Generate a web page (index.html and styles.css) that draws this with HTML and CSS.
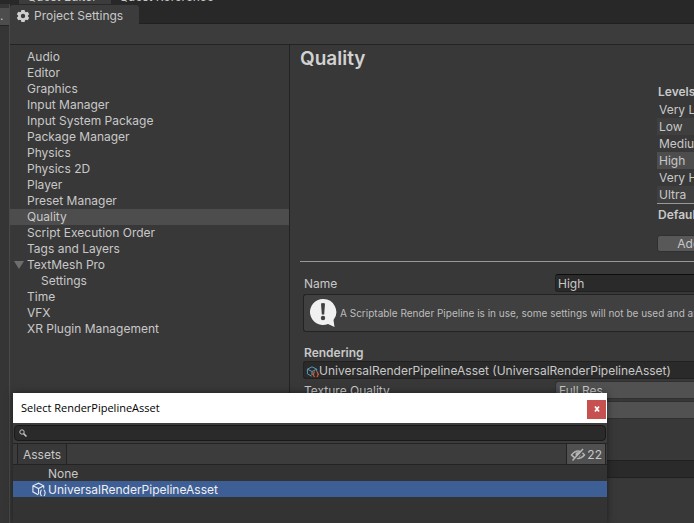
FILE: index.html
```html
<!DOCTYPE html>
<html lang="en">
<head>
<meta charset="utf-8">
<title>Project Settings</title>
<link rel="stylesheet" href="styles.css">
</head>
<body>
<div class="editor">
  <div class="back-tabs"><span class="back-tab back-tab-active">Quest Editor</span><span class="back-tab">Quest Reference</span></div>
  <div class="workspace">
    <div class="back-edge"><span class="back-button">.</span></div>
    <main class="settings">
      <div class="tab-bar">
        <div class="tab">
          <svg class="gear" viewBox="0 0 14 14" aria-hidden="true"><path fill="#d0d0d0" fill-rule="evenodd" d="M5.400 1h3.200l.4 1.700 1 .6 1.700-.5 1.500 2.500-1.300 1.200v1l1.300 1.200-1.500 2.500-1.700-.5-1 .6-.4 1.700H5.400L5 11.300l-1-.6-1.700.5L.8 8.700l1.300-1.200v-1L.8 5.300l1.500-2.500 1.700.5 1-.6zM7 4.800a2.200 2.200 0 1 0 0 4.400 2.200 2.200 0 0 0 0-4.400z"/></svg>
          <span>Project Settings</span>
        </div>
      </div>
      <div class="toolbar"></div>
      <div class="panes">
        <nav class="sidebar">
          <ul>
            <li>Audio</li>
            <li>Editor</li>
            <li>Graphics</li>
            <li>Input Manager</li>
            <li>Input System Package</li>
            <li>Package Manager</li>
            <li>Physics</li>
            <li>Physics 2D</li>
            <li>Player</li>
            <li>Preset Manager</li>
            <li class="selected">Quality</li>
            <li>Script Execution Order</li>
            <li>Tags and Layers</li>
            <li class="group">TextMesh Pro</li>
            <li class="child">Settings</li>
            <li>Time</li>
            <li>VFX</li>
            <li>XR Plugin Management</li>
          </ul>
        </nav>
        <section class="detail">
          <h1>Quality</h1>
          <div class="levels">
            <h2>Levels</h2>
            <ul>
              <li>Very Low</li>
              <li class="alt">Low</li>
              <li>Medium</li>
              <li class="current">High</li>
              <li>Very High</li>
              <li class="alt">Ultra</li>
            </ul>
            <h2 class="default">Default</h2>
            <button class="add" type="button">Add Quality Level</button>
          </div>
          <div class="properties">
            <div class="row">
              <label for="name">Name</label>
              <input id="name" class="field" type="text" value="High">
            </div>
            <div class="help">
              <svg class="bubble" viewBox="0 0 28 30" aria-hidden="true"><path fill="#f0f0f0" d="M14 1a13 13 0 1 0 5 25l6.500 3-1-7A13 13 0 0 0 14 1z"/><path fill="#404040" d="M12 5.500q2-1 4 0l-.8 11h-2.400z"/><circle cx="14" cy="20" r="2.200" fill="#404040"/></svg>
              <p>A Scriptable Render Pipeline is in use, some settings will not be used and are hidden</p>
            </div>
            <h2 class="section">Rendering</h2>
            <button class="object" type="button">
              <svg class="asset" viewBox="0 0 14 14" aria-hidden="true"><g fill="none" stroke="#5fa3c4"><path d="M6 12 1.500 9.500v-5L6.500 2l5 2.500V7M1.500 4.500l5 2.500 5-2.500M6.500 7v4"/></g><path fill="none" stroke="#d45b3a" stroke-width="1.300" d="M9.500 7.500q-1.200 0-1.200 1.500t-.8 1q.8 0 .8 1.200t1.200 1.300M11.500 7.500q1.200 0 1.200 1.500t.8 1q-.8 0-.8 1.200t-1.200 1.300"/></svg>
              <span>UniversalRenderPipelineAsset (UniversalRenderPipelineAsset)</span>
            </button>
            <div class="row">
              <label for="texture">Texture Quality</label>
              <select id="texture" class="select"><option>Full Res</option></select>
            </div>
            <div class="row"><span></span><div class="select"></div></div>
          </div>
          <div class="band"></div>
        </section>
      </div>
    </main>
  </div>
  <div class="picker" role="dialog" aria-labelledby="picker-title">
    <header class="title-bar">
      <h2 id="picker-title">Select RenderPipelineAsset</h2>
      <button class="close" type="button" aria-label="Close"><svg viewBox="0 0 8 8" aria-hidden="true"><path d="M2 1.500l4 5m0-5l-4 5" stroke="#fff" stroke-width="1.700"/></svg></button>
    </header>
    <div class="search-row">
      <div class="search">
        <svg viewBox="0 0 8 8" aria-hidden="true"><circle cx="3" cy="3" r="2.200" fill="none" stroke="#c4c4c4"/><path d="M4.600 4.600 7.500 7.500" stroke="#c4c4c4" stroke-width="1.500"/></svg>
        <input type="search" aria-label="Search">
      </div>
    </div>
    <div class="picker-tabs">
      <button class="picker-tab" type="button">Assets</button>
      <button class="hidden-count" type="button">
        <svg viewBox="0 0 16 14" aria-hidden="true"><path fill="none" stroke="#b4b4b4" stroke-width="1.500" d="M1.500 7q6.500-8 13 0-6.500 7-13 0z"/><circle cx="8" cy="6.500" r="2.500" fill="#b4b4b4"/><path d="M3.500 13 14.500 1.500" stroke="#505050" stroke-width="1.500"/><path d="M2.500 12.500 13 1" stroke="#b4b4b4" stroke-width="1.500"/></svg>
        <span>22</span>
      </button>
    </div>
    <ul class="results">
      <li>None</li>
      <li class="picked">
        <svg class="asset-large" viewBox="0 0 16 16" aria-hidden="true"><path fill="none" stroke="#e4e9f2" stroke-width="1.200" d="M7 13.500 1.500 10.500v-6.500L7.500 1.200l5.500 2.800V7M1.500 4 7.500 7l5.500-3M7.500 7v6"/><path fill="none" stroke="#e4e9f2" stroke-width="1.200" d="M11 8.500q-1.200 0-1.200 1.500t-1 1.500q1 0 1 1.500t1.200 1.500M13 8.500q1.200 0 1.200 1.500t1 1.500q-1 0-1 1.500T13 14.500"/></svg>
        <span>UniversalRenderPipelineAsset</span>
      </li>
    </ul>
  </div>
</div>
</body>
</html>
```
FILE: styles.css
```css
* { box-sizing: border-box; }

body {
  margin: 0;
  background: #383838;
  color: #c8c8c8;
  font: 12px/16px Inter, "Liberation Sans", sans-serif;
}

ul, h1, h2, p { margin: 0; padding: 0; }
ul { list-style: none; }
h2 { font-size: 12px; font-weight: 600; }
button, input, select { font: inherit; color: inherit; margin: 0; }
svg { display: block; flex: none; }

.editor {
  position: relative;
  display: flex;
  flex-direction: column;
  min-height: 100vh;
  overflow: hidden;
}

.back-tabs {
  display: flex;
  align-items: flex-end;
  height: 4px;
  padding-left: 19px;
  overflow: hidden;
  background: #282828;
}
.back-tab { padding: 0 8px; height: 16px; line-height: 18px; }
.back-tab-active { padding-right: 14px; background: #3c3c3c; }

.workspace { display: flex; flex: 1; }
.back-edge {
  flex: none;
  width: 10px;
  padding-top: 4px;
  background: #353535;
  border-right: 1px solid #4a4a4a;
}
.back-button {
  display: block;
  height: 18px;
  background: #4d4d4d;
  border-bottom: 1px solid #242424;
}

.settings {
  display: flex;
  flex: 1;
  flex-direction: column;
  min-width: 0;
}
.tab-bar {
  display: flex;
  height: 20px;
  padding-top: 1px;
  background: #282828;
  border-bottom: 1px solid #202020;
}
.tab {
  display: flex;
  align-items: center;
  gap: 4px;
  height: 20px;
  padding: 2px 16px 0 6px;
  background: #3c3c3c;
  border-radius: 3px 3px 0 0;
}
.gear { width: 14px; height: 14px; }
.toolbar {
  height: 21px;
  background: #3c3c3c;
  border-bottom: 1px solid #232323;
}
.panes { display: flex; flex: 1; }

.sidebar {
  flex: none;
  width: 280px;
  padding-top: 4px;
  border-right: 1px solid #232323;
}
.sidebar li { padding-left: 17px; }
.sidebar .selected { background: #4d4d4d; }
.sidebar .child { padding-left: 31px; }
.sidebar .group { display: flex; align-items: center; padding-left: 4px; gap: 3px; }
.group::before {
  content: "";
  border: solid transparent;
  border-width: 8px 5px 0;
  border-top-color: #6e6e6e;
}

.detail {
  flex: 1;
  min-width: 0;
  overflow: hidden;
  white-space: nowrap;
}
h1 {
  padding: 2px 0 0 10px;
  font-size: 19px;
  font-weight: 600;
  line-height: 24px;
  color: #d2d2d2;
}

.levels {
  margin: 12px 0 0 10px;
  padding: 0 0 9px 357px;
  border-bottom: 1px solid #999;
}
.levels h2 { padding-left: 1px; line-height: 18px; }
.levels ul { border-bottom: 1px solid #999; }
.levels li { padding-left: 2px; line-height: 17px; }
.levels .alt { background: #3f3f3f; }
.levels .current { background: #4d4d4d; }
.levels .default { padding-top: 2px; }
.add {
  display: block;
  width: 140px;
  height: 17px;
  margin: 11px 0 0;
  padding: 0;
  background: #585858;
  border: 1px solid #303030;
  border-radius: 3px;
  line-height: 15px;
}

.properties { padding: 12px 0 0 13px; }
.row {
  display: grid;
  grid-template-columns: 252px 1fr;
  height: 18px;
  margin-bottom: 2px;
}
.row label { padding-left: 1px; line-height: 20px; }
.field {
  width: 100%;
  min-width: 0;
  height: 18px;
  padding: 1px 2px 0;
  background: #2a2a2a;
  border: 1px solid #212121;
  border-top-color: #0d0d0d;
  border-right: 0;
  border-radius: 3px 0 0 3px;
}
.select {
  width: 100%;
  height: 18px;
  padding: 1px 3px 0;
  appearance: none;
  background: #515151;
  border: 1px solid #303030;
  border-right: 0;
  border-radius: 3px 0 0 3px;
}
.help {
  display: flex;
  align-items: center;
  gap: 3px;
  height: 38px;
  padding-left: 5px;
  background: #404040;
  border: 1px solid #232323;
  border-right: 0;
  border-radius: 3px 0 0 3px;
  font-size: 10px;
  color: #bdbdbd;
}
.bubble { width: 28px; height: 30px; }
.section { padding: 13px 0 0 1px; }
.object {
  display: flex;
  align-items: center;
  width: 100%;
  height: 18px;
  margin-bottom: 2px;
  padding: 2px 2px 0;
  overflow: hidden;
  background: #2a2a2a;
  border: 1px solid #212121;
  border-right: 0;
  border-radius: 3px 0 0 3px;
}
.asset { width: 13px; height: 13px; }
.band {
  height: 18px;
  margin-top: 41px;
  background: #2a2a2a;
  border: solid #202020;
  border-width: 1px 0;
}

.picker {
  position: absolute;
  top: 393px;
  bottom: 0;
  left: 13px;
  width: 594px;
  background: #333;
  box-shadow: 0 0 7px rgba(0, 0, 0, 0.5);
}
.title-bar {
  display: flex;
  align-items: center;
  justify-content: space-between;
  height: 30px;
  padding: 0 1px 0 8px;
  background: #fff;
}
.title-bar h2 {
  color: #000;
  font: 11px/16px "Open Sans", "Noto Sans", sans-serif;
}
.close {
  display: grid;
  place-items: center;
  width: 19px;
  height: 19px;
  padding: 0;
  margin-top: 2px;
  background: #c75050;
  border: 0;
}
.close svg { width: 8px; height: 8px; }
.search-row {
  padding: 2px 1px;
  background: #3c3c3c;
}
.search {
  display: flex;
  align-items: center;
  height: 16px;
  padding-left: 4px;
  background: #2a2a2a;
  border: 1px solid #191919;
  border-radius: 4px;
}
.search svg { width: 8px; height: 8px; }
.search input {
  flex: 1;
  height: 14px;
  min-width: 0;
  padding: 0 4px;
  background: none;
  border: 0;
  appearance: none;
}
.picker-tabs {
  display: flex;
  justify-content: space-between;
  height: 22px;
  padding: 0 1px 0 4px;
  background: #3c3c3c;
  border: solid #232323;
  border-width: 1px 0;
}
.picker-tab, .hidden-count {
  padding: 2px 5px 0;
  background: #383838;
  border: solid #232323;
  border-width: 0 1px;
}
.hidden-count {
  display: flex;
  align-items: center;
  gap: 1px;
  padding: 1px 3px 0;
  background: #505050;
}
.hidden-count svg { width: 16px; height: 14px; }
.results li { padding: 1px 0 0 35px; line-height: 15px; }
.results .picked {
  display: flex;
  align-items: center;
  gap: 1px;
  padding-left: 18px;
  background: #3e5f96;
  color: #f0f0f0;
}
.asset-large { width: 16px; height: 15px; }
```
